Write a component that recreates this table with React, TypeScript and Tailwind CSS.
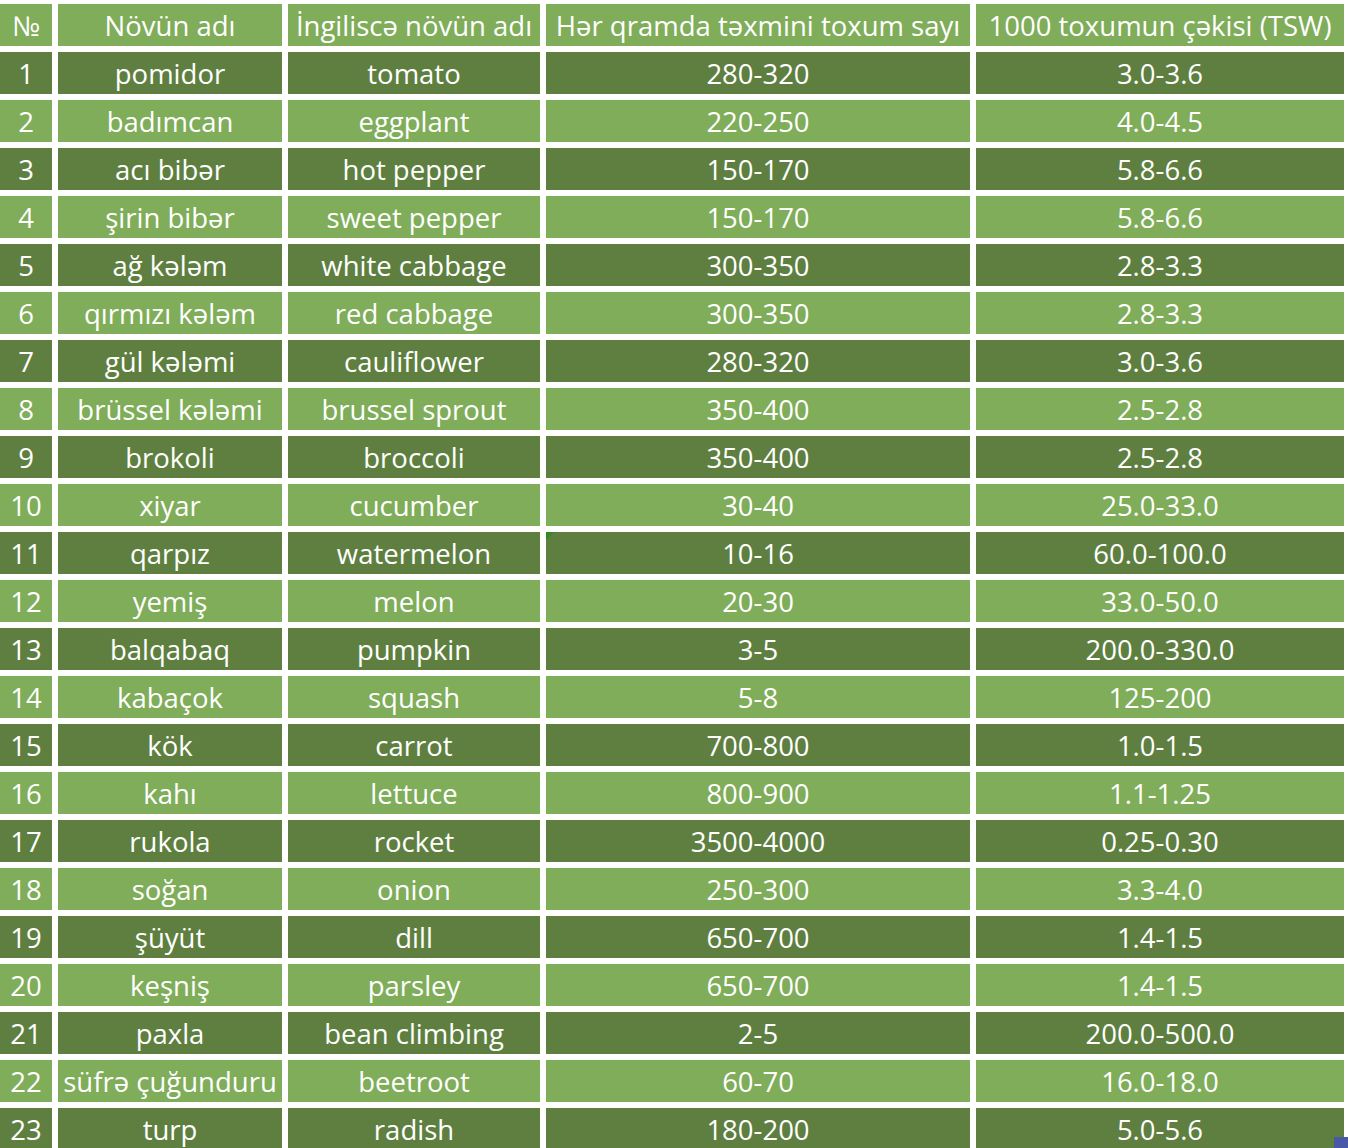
import React from 'react';

type Row = [string, string, string, string];

const rows: Row[] = [
  ['pomidor', 'tomato', '280-320', '3.0-3.6'],
  ['badımcan', 'eggplant', '220-250', '4.0-4.5'],
  ['acı bibər', 'hot pepper', '150-170', '5.8-6.6'],
  ['şirin bibər', 'sweet pepper', '150-170', '5.8-6.6'],
  ['ağ kələm', 'white cabbage', '300-350', '2.8-3.3'],
  ['qırmızı kələm', 'red cabbage', '300-350', '2.8-3.3'],
  ['gül kələmi', 'cauliflower', '280-320', '3.0-3.6'],
  ['brüssel kələmi', 'brussel sprout', '350-400', '2.5-2.8'],
  ['brokoli', 'broccoli', '350-400', '2.5-2.8'],
  ['xiyar', 'cucumber', '30-40', '25.0-33.0'],
  ['qarpız', 'watermelon', '10-16', '60.0-100.0'],
  ['yemiş', 'melon', '20-30', '33.0-50.0'],
  ['balqabaq', 'pumpkin', '3-5', '200.0-330.0'],
  ['kabaçok', 'squash', '5-8', '125-200'],
  ['kök', 'carrot', '700-800', '1.0-1.5'],
  ['kahı', 'lettuce', '800-900', '1.1-1.25'],
  ['rukola', 'rocket', '3500-4000', '0.25-0.30'],
  ['soğan', 'onion', '250-300', '3.3-4.0'],
  ['şüyüt', 'dill', '650-700', '1.4-1.5'],
  ['keşniş', 'parsley', '650-700', '1.4-1.5'],
  ['paxla', 'bean climbing', '2-5', '200.0-500.0'],
  ['süfrə çuğunduru', 'beetroot', '60-70', '16.0-18.0'],
  ['turp', 'radish', '180-200', '5.0-5.6'],
];

const headers = ['№', 'Növün adı', 'İngiliscə növün adı', 'Hər qramda təxmini toxum sayı', '1000 toxumun çəkisi (TSW)'];

const Cell = ({ dark, children, flag }: { dark: boolean; children: React.ReactNode; flag?: boolean }) => (
  <div
    className={`relative h-[42px] flex items-center justify-center whitespace-nowrap overflow-visible ${dark ? 'bg-[#5e7f3f]' : 'bg-[#7fad5a]'}`}
  >
    {flag && (
      <span className="absolute left-0 top-0 w-0 h-0 border-t-[8px] border-r-[8px] border-t-[#2f8a1f] border-r-transparent" />
    )}
    <span className="pt-[2px]">{children}</span>
  </div>
);

export default function App() {
  return (
    <div className="relative w-[1348px] h-[1148px] overflow-hidden bg-white">
      <div
        className="grid grid-cols-[52px_224px_252px_424px_368px] gap-[6px] pt-[4px] text-white text-[27.5px] leading-none"
        style={{ fontFamily: '"Open Sans", Lato, sans-serif' }}
      >
        {headers.map(h => (
          <Cell key={h} dark={false}>{h}</Cell>
        ))}
        {rows.map((r, i) => (
          <React.Fragment key={i}>
            <Cell dark={i % 2 === 0}>{i + 1}</Cell>
            <Cell dark={i % 2 === 0}>{r[0]}</Cell>
            <Cell dark={i % 2 === 0}>{r[1]}</Cell>
            <Cell dark={i % 2 === 0} flag={i === 10}>{r[2]}</Cell>
            <Cell dark={i % 2 === 0}>{r[3]}</Cell>
          </React.Fragment>
        ))}
      </div>
      <div className="absolute right-0 bottom-0 w-[14px] h-[11px] bg-[#4a58a8]" />
    </div>
  );
}
